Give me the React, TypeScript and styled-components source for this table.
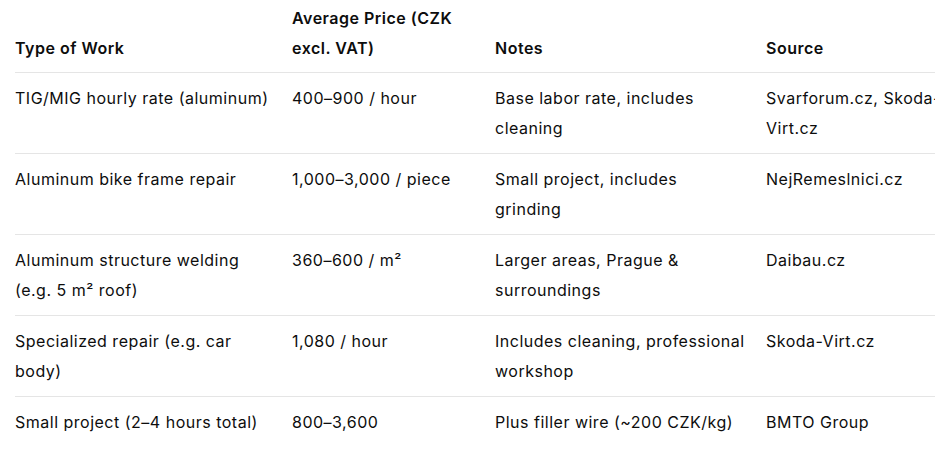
import React from "react";
import styled, { createGlobalStyle } from "styled-components";

const Global = createGlobalStyle`
  html, body { margin: 0; padding: 0; background: #ffffff; }
  body {
    font-family: Inter, "Noto Sans", "Liberation Sans", sans-serif;
    color: #0d0d0d;
    -webkit-font-smoothing: antialiased;
  }
`;

const Viewport = styled.div`
  width: 935px;
  height: 453px;
  overflow: hidden;
  padding-left: 15px;
  box-sizing: border-box;
`;

const Table = styled.table`
  border-collapse: collapse;
  table-layout: fixed;
  width: 971px;
  margin-top: -7px;
  font-size: 16px;
  line-height: 30px;
  letter-spacing: 0.5px;
`;

const HeadCell = styled.th`
  text-align: left;
  font-weight: 600;
  vertical-align: bottom;
  padding: 10px 20px 9px 0;
  border-bottom: 1px solid #e5e5e5;
`;

const Cell = styled.td<{ $last?: boolean }>`
  vertical-align: top;
  padding: 10px 20px 10px 0;
  border-bottom: ${(p) => (p.$last ? "none" : "1px solid #e5e5e5")};
`;

const columns = [277, 203, 271, 220];

const headers = ["Type of Work", "Average Price (CZK excl. VAT)", "Notes", "Source"];

const rows: string[][] = [
  ["TIG/MIG hourly rate (aluminum)", "400–900 / hour", "Base labor rate, includes cleaning", "Svarforum.cz, Skoda-Virt.cz"],
  ["Aluminum bike frame repair", "1,000–3,000 / piece", "Small project, includes grinding", "NejRemeslnici.cz"],
  ["Aluminum structure welding (e.g. 5 m² roof)", "360–600 / m²", "Larger areas, Prague & surroundings", "Daibau.cz"],
  ["Specialized repair (e.g. car body)", "1,080 / hour", "Includes cleaning, professional workshop", "Skoda-Virt.cz"],
  ["Small project (2–4 hours total)", "800–3,600", "Plus filler wire (~200 CZK/kg)", "BMTO Group"],
];

export default function App() {
  return (
    <>
      <Global />
      <Viewport>
        <Table>
          <colgroup>
            {columns.map((w, i) => (
              <col key={i} style={{ width: w }} />
            ))}
          </colgroup>
          <thead>
            <tr>
              {headers.map((h) => (
                <HeadCell key={h}>{h}</HeadCell>
              ))}
            </tr>
          </thead>
          <tbody>
            {rows.map((r, i) => (
              <tr key={i}>
                {r.map((c, j) => (
                  <Cell key={j} $last={i === rows.length - 1}>
                    {c}
                  </Cell>
                ))}
              </tr>
            ))}
          </tbody>
        </Table>
      </Viewport>
    </>
  );
}
